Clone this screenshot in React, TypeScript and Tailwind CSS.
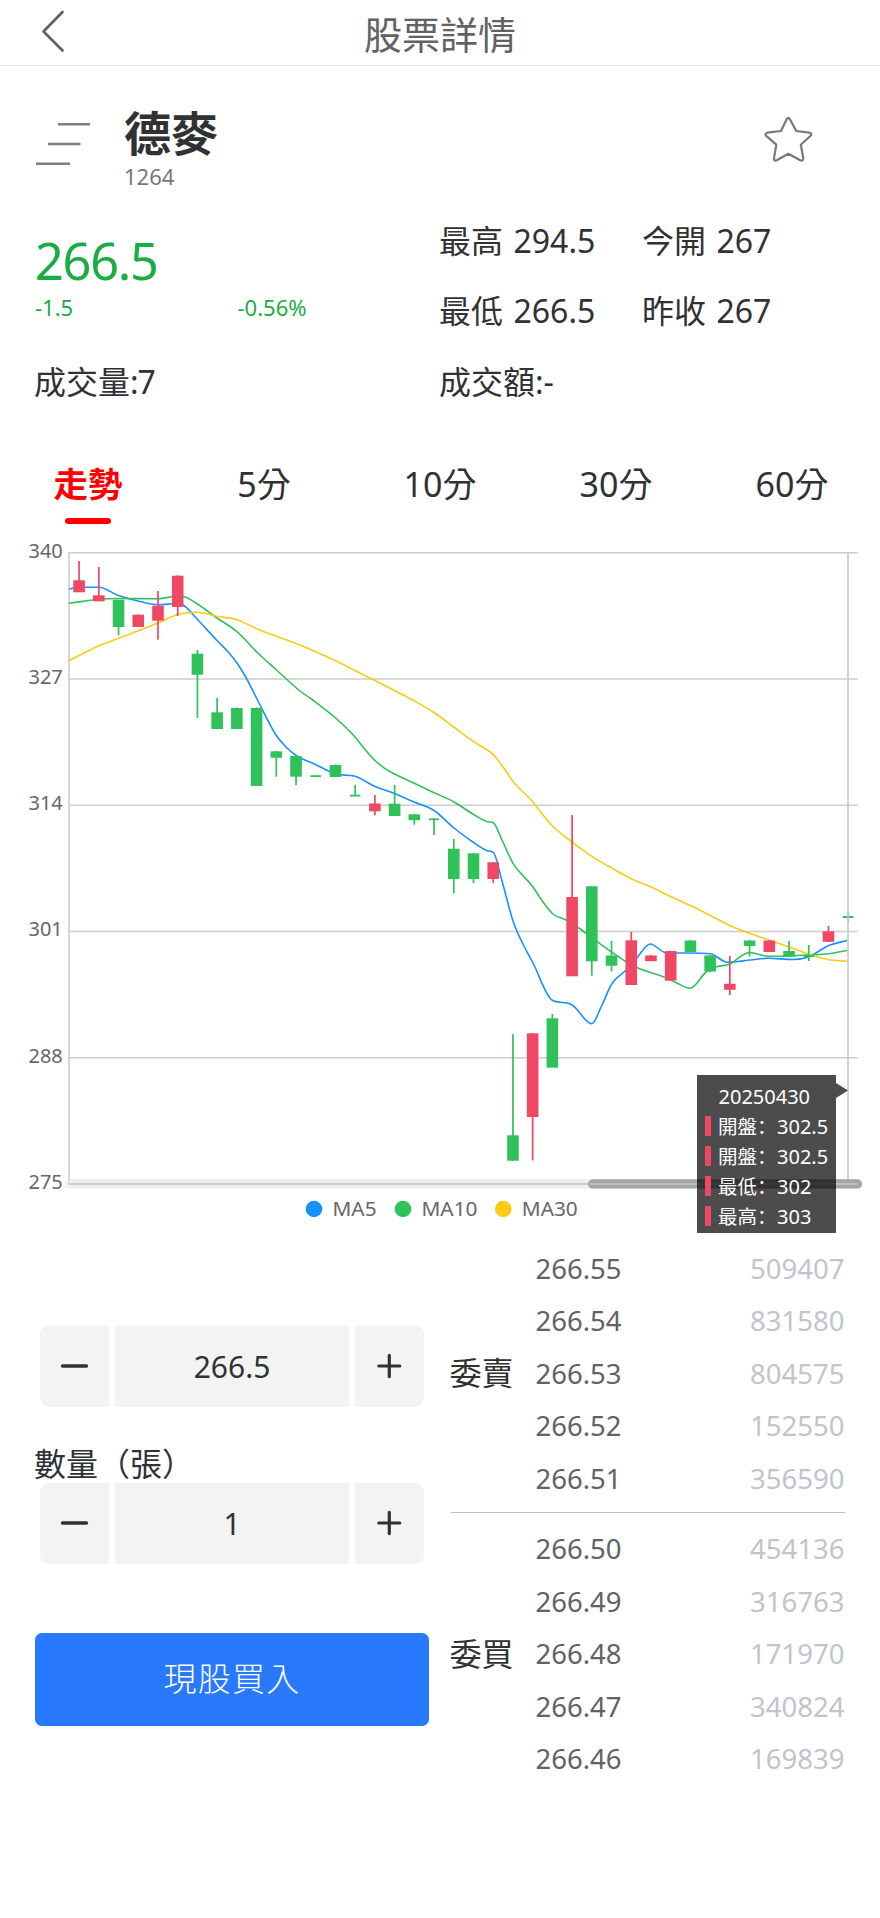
import React from "react";

const FONT = "font-['Noto_Sans','Noto_Sans_CJK_TC',sans-serif]";

type Point = [number, number];

const RED = "#f04864";
const GREEN = "#2fc25b";

// body top, body bottom, wick high, wick low, colour
type Candle = [number, number, number, number, string];

const candles: Candle[] = [
  [580.3, 592.3, 561, 592, RED],
  [595.3, 601.3, 567, 601, RED],
  [599.7, 627, 600, 635.3, GREEN],
  [614.7, 627, 614.3, 627, RED],
  [605.7, 620.7, 591, 639.7, RED],
  [575.7, 607, 575.5, 616, RED],
  [653.7, 674.7, 650, 718, GREEN],
  [712.3, 729, 698, 729, GREEN],
  [708, 729, 707.5, 729, GREEN],
  [708, 786, 707.5, 786, GREEN],
  [751.3, 757.7, 751, 776.7, GREEN],
  [756, 776.7, 755.5, 785, GREEN],
  [775.2, 777, 775.2, 777, GREEN],
  [765, 777, 764.5, 777, GREEN],
  [794.7, 796.5, 785, 796, GREEN],
  [803.5, 811.3, 795, 815.3, RED],
  [803.7, 816, 785, 816, GREEN],
  [814.3, 820.2, 814, 824.7, GREEN],
  [818.5, 820.2, 818, 835, GREEN],
  [848.7, 879, 839, 893.3, GREEN],
  [853.3, 879, 853, 883, GREEN],
  [862.3, 879, 862, 883, RED],
  [1135.3, 1160.7, 1034, 1161, GREEN],
  [1033.3, 1117, 1033, 1160.5, RED],
  [1018.3, 1067.7, 1014, 1067, GREEN],
  [897, 976.3, 815, 976, RED],
  [886.3, 961.3, 886, 975.7, GREEN],
  [955.5, 965.7, 941, 971.3, GREEN],
  [940.3, 985, 932, 985, RED],
  [955.5, 961.2, 955, 961, RED],
  [951, 980.7, 950.7, 980.7, RED],
  [940.5, 952, 940, 952, GREEN],
  [955.5, 971.5, 955, 972, GREEN],
  [983.8, 989.8, 956, 995, RED],
  [940.5, 946, 940, 956.5, GREEN],
  [940.5, 952, 940, 952, RED],
  [951, 956.5, 941, 957, GREEN],
  [955, 957, 945, 961, GREEN],
  [931.3, 941.8, 926, 942, RED],
  [916, 918, 912, 922, GREEN],
];

const ma5: Point[] = [
  [69, 589], [79, 587.3], [98.7, 587.3], [118.5, 595.5], [138, 601], [158, 604.7], [178, 603.5], [184, 605.5],
  [197.5, 619.5], [217, 640.5], [228, 651.8], [237, 663], [246, 677.5], [257, 699], [276, 735], [286, 747], [297, 756],
  [315.5, 764.5], [335.5, 774], [355, 776.2], [375, 786.5], [394, 793.3], [414, 802], [434, 810.5], [454, 828],
  [473.5, 842.5], [486, 850.3], [493.3, 852.3], [502, 881], [513, 921], [521, 940], [533, 963], [552, 1000],
  [572.3, 1005], [591.7, 1023.7], [602, 1005], [611.7, 984], [626.7, 969.5],
  [636.7, 958], [650.3, 944], [666.7, 953], [690.3, 953], [710.3, 953.7], [727.3, 962.3], [768.3, 958.3],
  [793, 959.5], [809, 956.7], [828.3, 945.7], [848, 940.3],
];

const ma10: Point[] = [
  [69, 603.3], [98.7, 599.3], [118.7, 598.5], [158, 598.7], [178, 596], [185, 597], [197.5, 604], [217, 618],
  [237, 631.7], [256.7, 652], [276.5, 670], [300, 691], [312.7, 700], [335, 717.5], [355, 737], [365, 749.5],
  [375, 760.5], [384, 767.8], [394.7, 774], [414.3, 783.3], [434, 792.7], [453.7, 801.7], [473.3, 814.3],
  [486.7, 821.5], [493.3, 822.7], [502, 840], [513, 863.3], [521, 873.5], [531.7, 885.3], [543, 902], [553, 914],
  [566.7, 920.3], [578, 927.5], [597.7, 942], [611.7, 952],
  [626.7, 962], [638, 968], [666.7, 978], [676.7, 983], [690, 988.3], [706.7, 971.5], [716.7, 966.7],
  [729.3, 964.3], [749.3, 952.5], [768.3, 956.3], [789, 956], [809, 954.9], [828.3, 953.8], [848, 950.3],
];

const ma30: Point[] = [
  [69, 660.7], [99, 645.7], [118.7, 638.3], [158, 623], [178, 614.5], [197, 612.3], [217, 616.3], [237, 619.7],
  [256.7, 628.7], [300, 645], [335, 660.5], [355, 670.5], [391.6, 689], [412.7, 700], [434, 712.5], [453.7, 727],
  [475, 742.7], [493, 754.3], [503, 767], [513, 781.5], [532, 801], [543, 815], [553, 826.5], [571.7, 841.7],
  [591.7, 856.3], [611.7, 868], [631.7, 879], [651.7, 887.3], [670, 896.3], [690, 905.3], [710, 915.3],
  [730, 925.7], [749, 933], [768, 939.7], [789, 947], [809, 954.2], [828, 959.5], [848, 961.3],
];

// Monotone cubic smoothing through the points.
function smooth(p: Point[]): string {
  const n = p.length;
  const s: number[] = [];
  for (let i = 0; i < n - 1; i++) s.push((p[i + 1][1] - p[i][1]) / (p[i + 1][0] - p[i][0]));
  const m = p.map((_, i) => {
    if (i === 0) return s[0];
    if (i === n - 1) return s[n - 2];
    const a = s[i - 1];
    const b = s[i];
    if (a * b <= 0) return 0;
    const limit = 2.5 * Math.min(Math.abs(a), Math.abs(b));
    return Math.sign(a) * Math.min(Math.abs(a + b) / 2, limit);
  });
  let d = `M${p[0][0]} ${p[0][1]}`;
  for (let i = 0; i < n - 1; i++) {
    const h = (p[i + 1][0] - p[i][0]) / 3;
    d += `C${p[i][0] + h} ${p[i][1] + m[i] * h} ${p[i + 1][0] - h} ${p[i + 1][1] - m[i + 1] * h} ${p[i + 1][0]} ${p[i + 1][1]}`;
  }
  return d;
}

const ticks = [340, 327, 314, 301, 288, 275];
const legend = [
  { label: "MA5", color: "#1890ff", x: 314 },
  { label: "MA10", color: "#2fc25b", x: 403 },
  { label: "MA30", color: "#facc14", x: 503.3 },
];

function Chart() {
  return (
    <svg className="block h-[700px] w-[880px]" viewBox="0 535 880 700" fontSize="20">
      {ticks.map((t, i) => (
        <g key={t}>
          <line x1="69" x2="857.7" y1={552.7 + i * 126.25} y2={552.7 + i * 126.25} stroke="#ccc" strokeWidth="1.6" />
          <text x="62.8" y={557.5 + i * 126.25} textAnchor="end" fill="#666">{t}</text>
        </g>
      ))}
      <line x1="69" x2="69" y1="552" y2="1184" stroke="#ccc" strokeWidth="1.6" />
      <g fill="none" strokeWidth="1.6">
        <path d={smooth(ma5)} stroke="#1890ff" />
        <path d={smooth(ma10)} stroke="#2fc25b" />
        <path d={smooth(ma30)} stroke="#facc14" />
      </g>
      {candles.map(([top, bottom, high, low, color], i) => {
        const x = 79.1 + i * 19.72;
        const w = bottom - top < 3 ? 10.4 : 11.6;
        return (
          <g key={i} fill={color}>
            <rect x={x - 0.85} y={high} width="1.7" height={low - high} />
            <rect x={x - w / 2} y={top} width={w} height={bottom - top} />
          </g>
        );
      })}
      <line x1="848" x2="848" y1="552" y2="1183" stroke="#ccc" strokeWidth="1.7" />
      <rect x="65" y="1179.3" width="797" height="9.3" rx="4.6" fill="#e6dfe4" fillOpacity="0.6" />
      <rect x="588" y="1179.3" width="274" height="9.3" rx="4.6" fill="#a5a5a5" />
      <line x1="69" x2="588" y1="1184" y2="1184" stroke="#cfcccf" strokeWidth="1.8" />
      <line x1="590" x2="857.7" y1="1184" y2="1184" stroke="#bfbfbf" strokeWidth="1.8" />
      {legend.map((l) => (
        <g key={l.label}>
          <circle cx={l.x} cy="1209" r="8.3" fill={l.color} />
          <text x={l.x + 18.5} y="1216" fill="#666" fontSize="20.8">{l.label}</text>
        </g>
      ))}
    </svg>
  );
}

const tooltipRows = [
  ["開盤", "302.5"],
  ["開盤", "302.5"],
  ["最低", "302"],
  ["最高", "303"],
];

function Tooltip() {
  return (
    <div className="absolute left-[696.5px] top-[539.5px] h-[158.5px] w-[139.5px] bg-black/70 pt-[7px] text-[20px] leading-[30px] text-white">
      <div className="pl-[22px]">20250430</div>
      {tooltipRows.map(([name, value], i) => (
        <div key={i} className="flex h-[30px] items-center whitespace-nowrap">
          <span className="-mt-[1px] ml-[8.5px] mr-[7px] h-[19.5px] w-[6px] bg-[#f04864]" />
          <span className="w-[59px] text-[19.5px]">
            {name}
            <span lang="zh-CN" className="font-['Noto_Sans_CJK_SC',sans-serif]">：</span>
          </span>
          <span>{value}</span>
        </div>
      ))}
      <svg className="absolute left-[139.5px] top-[8px] h-[16px] w-[12px]" viewBox="0 0 12 16">
        <path d="M0 0L12 7.5L0 15Z" fill="#000" fillOpacity="0.7" />
      </svg>
    </div>
  );
}

function Stepper({ value }: { value: string }) {
  return (
    <div className="ml-[5px] flex h-[81px] w-[384px] gap-[6px] text-[#303133]">
      <button className="flex w-[69px] items-center justify-center rounded-l-[9px] bg-[#f2f3f5]">
        <svg className="-mt-[2px] h-[30px] w-[30px]" viewBox="0 0 30 30" stroke="currentColor" strokeWidth="3.4" strokeLinecap="round">
          <path d="M2.5 15H26.5" />
        </svg>
      </button>
      <div className="flex w-[234px] items-center justify-center bg-[#f2f3f5] text-[30px]">{value}</div>
      <button className="flex w-[69px] items-center justify-center rounded-r-[9px] bg-[#f2f3f5]">
        <svg className="-mt-[2px] h-[30px] w-[30px]" viewBox="0 0 30 30" stroke="currentColor" strokeWidth="3.2" strokeLinecap="round">
          <path d="M3.8 15H24.8M14.3 4.4V25.6" />
        </svg>
      </button>
    </div>
  );
}

const sells = [["266.55", "509407"], ["266.54", "831580"], ["266.53", "804575"], ["266.52", "152550"], ["266.51", "356590"]];
const buys = [["266.50", "454136"], ["266.49", "316763"], ["266.48", "171970"], ["266.47", "340824"], ["266.46", "169839"]];

function Depth({ label, rows }: { label: string; rows: string[][] }) {
  return (
    <div className="flex items-center">
      <div className="-ml-[1px] w-[86px] text-[32px] leading-[40px] text-[#303133]">{label}</div>
      <div className="flex-1">
        {rows.map(([price, amount]) => (
          <div key={price} className="flex h-[52.5px] items-center justify-between text-[27.5px]">
            <span className="text-[#606266]">{price}</span>
            <span className="text-[#c0c4cc]">{amount}</span>
          </div>
        ))}
      </div>
    </div>
  );
}

function Quote({ name, value }: { name: string; value: string }) {
  return (
    <div className="flex h-[70px] items-start gap-[10.5px] whitespace-nowrap">
      <span>{name}</span>
      <span>{value}</span>
    </div>
  );
}

const tabs = ["走勢", "5分", "10分", "30分", "60分"];

export default function App() {
  return (
    <div className={`flex h-[1918px] w-[880px] flex-col overflow-hidden bg-white text-[#303133] ${FONT}`}>
      <header className="grid h-[66px] shrink-0 grid-cols-[100px_1fr_100px] items-center border-b border-[#e4e4e6]">
        <svg className="ml-[40px] h-[44px] w-[26px] -translate-y-[2px]" viewBox="0 0 26 44" fill="none" stroke="#606266" strokeWidth="2.7" strokeLinecap="round" strokeLinejoin="round">
          <path d="M22.5 3L3.5 22.5L22.5 41.5" />
        </svg>
        <h1 className="pt-[2px] text-center text-[38px] leading-[60px] text-[#606266]">股票詳情</h1>
      </header>

      <section className="flex h-[142px] shrink-0 items-start">
        <svg className="ml-[34px] mt-[52px] h-[52px] w-[60px]" viewBox="34 118 60 52" stroke="#7c7c88" strokeWidth="2.4">
          <path d="M58 124.3H90M48 144H80.5M36 163.7H70" />
        </svg>
        <div className="ml-[30px] mt-[40px] flex-1">
          <h2 className="h-[57px] text-[47px] font-bold leading-[54px]">德麥</h2>
          <div className="text-[22px] leading-[26px] text-[#77777f]">1264</div>
        </div>
        <svg className="mr-[66px] mt-[49px] h-[50px] w-[50px]" viewBox="764 115 50 50" fill="none" stroke="#77777f" strokeWidth="2.2" strokeLinejoin="round" strokeLinecap="round">
          <path d="M786.8 119Q788.3 116.8 789.8 119L796.3 131L809.6 132.7Q812.5 133.5 810.6 135.8L800.8 144.7L803.3 158.3Q803.2 161.5 800.3 160.3L788.3 153.8L776.8 160.3Q773.8 161.3 774 158.3L776.3 144.7L766.2 135.8Q764.4 133.4 767.2 132.7L781 131Z" />
        </svg>
      </section>

      <section className="grid h-[130px] shrink-0 grid-cols-[405px_203px_1fr] pl-[35px]">
        <div>
          <div className="mt-[23px] text-[50.5px] leading-[60px] tracking-[-1.3px] text-[#1aad45]">266.5</div>
          <div className="mt-[2px] grid grid-cols-2 text-[22px] leading-[28px] text-[#1aad45]">
            <span>-1.5</span>
            <span>-0.56%</span>
          </div>
        </div>
        <div className="-ml-[1px] pt-[9px] text-[32px] leading-[48px]">
          <Quote name="最高" value="294.5" />
          <Quote name="最低" value="266.5" />
        </div>
        <div className="-ml-[1px] pt-[9px] text-[32px] leading-[48px]">
          <Quote name="今開" value="267" />
          <Quote name="昨收" value="267" />
        </div>
      </section>

      <section className="grid h-[112px] shrink-0 grid-cols-[405px_1fr] pl-[34px] pt-[20px] text-[32px] leading-[48px]">
        <span>成交量<span className="tracking-[-1px]">:7</span></span>
        <span>成交額:-</span>
      </section>

      <nav className="grid h-[85px] shrink-0 grid-cols-5 text-[34px] leading-[50px]">
        {tabs.map((t, i) => (
          <div key={t} className="flex flex-col items-center pt-[9px]">
            <span className={i === 0 ? "text-[34.5px] font-bold text-[#ff0000]" : ""}>{t}</span>
            {i === 0 && <span className="mt-[9px] h-[6px] w-[46px] rounded-full bg-[#ff0000]" />}
          </div>
        ))}
      </nav>

      <section className="relative h-[700px] shrink-0">
        <Chart />
        <Tooltip />
      </section>

      <section className="flex shrink-0 justify-between pl-[35px] pr-[35.5px]">
        <div className="w-[394px] pt-[91px]">
          <Stepper value="266.5" />
          <div className="flex h-[76px] items-end text-[32px] leading-[40px]">
            <span className="-mb-[1px] -ml-[1px]">數量（張）</span>
          </div>
          <Stepper value="1" />
          <button className="mt-[69px] flex h-[93px] w-[394px] items-center justify-center rounded-[7px] bg-[#2979ff] pb-[4px] font-['Noto_Sans_CJK_TC',sans-serif] text-[33px] font-light tracking-[1.3px] text-white">
            現股買入
          </button>
        </div>
        <div className="w-[394px] pt-[7px]">
          <Depth label="委賣" rows={sells} />
          <div className="mb-[10px] mt-[7px] h-px bg-[#bfc0c2]" />
          <Depth label="委買" rows={buys} />
        </div>
      </section>
    </div>
  );
}
